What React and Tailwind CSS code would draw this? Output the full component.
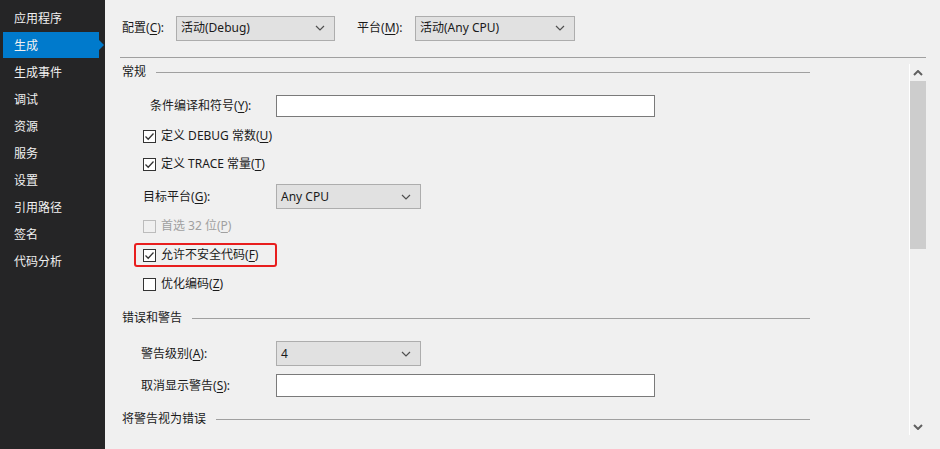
import React from 'react';

const NAV = ['应用程序', '生成', '生成事件', '调试', '资源', '服务', '设置', '引用路径', '签名', '代码分析'];

// 下拉箭头
function Chevron({ up, down }) {
  const d = up ? 'M1 5 L5 1 L9 5' : 'M1 1 L5 5 L9 1';
  return (
    <svg width="10" height="6" viewBox="0 0 10 6" className="shrink-0">
      <path d={d} fill="none" stroke={up || down ? '#606060' : '#505050'} strokeWidth={up || down ? 2 : 1.2} />
    </svg>
  );
}

// 助记符标签，例如 配置(C):
function Mn({ text, k, colon }) {
  return (
    <span>
      {text}(<span className="underline underline-offset-2">{k}</span>){colon ? ':' : ''}
    </span>
  );
}

function Select({ value, w }) {
  return (
    <div className={`${w} h-[25px] flex items-center justify-between bg-[#e1e1e1] border border-[#adadad] pl-[4px] pr-[9px]`}>
      <span>{value}</span>
      <Chevron />
    </div>
  );
}

function Check({ checked, disabled }) {
  return (
    <div className={`w-[13px] h-[13px] border flex items-center justify-center ${disabled ? 'border-[#bcbcbc] bg-[#f0f0f0]' : 'border-[#333] bg-white'}`}>
      {checked && (
        <svg width="11" height="11" viewBox="0 0 11 11">
          <path d="M1.5 5.5 L4.2 8.2 L9.5 2.5" fill="none" stroke="#333" strokeWidth="1.3" />
        </svg>
      )}
    </div>
  );
}

function CheckRow({ checked, disabled, label, k, cls }) {
  return (
    <div className={`flex items-center gap-[5px] h-[20px] ${cls}`}>
      <Check checked={checked} disabled={disabled} />
      <span className={disabled ? 'text-[#a0a0a0]' : ''}>
        <Mn text={label} k={k} />
      </span>
    </div>
  );
}

function Section({ title, cls }) {
  return (
    <div className={`flex items-center h-[20px] gap-[10px] pr-[99px] ${cls}`}>
      <span>{title}</span>
      <div className="flex-1 h-px bg-[#a0a0a0]" />
    </div>
  );
}

export default function App() {
  return (
    <div
      className="w-[940px] h-[449px] flex overflow-hidden text-[12px] text-[#1a1a1a]"
      style={{ fontFamily: '"Noto Sans", "Noto Sans CJK SC", sans-serif' }}
    >
      {/* 左侧导航 */}
      <div className="w-[105px] bg-[#252526] pt-[5px] flex flex-col">
        {NAV.map((n) => (
          <div key={n} className="relative h-[27px] flex items-center">
            {n === '生成' && (
              <>
                <div className="absolute left-[3px] top-0 w-[96px] h-[26px] bg-[#007acc]" />
                <div className="absolute left-[99px] top-[8px] w-0 h-0 border-y-[5px] border-y-transparent border-l-[5px] border-l-[#007acc]" />
              </>
            )}
            <span className="relative pl-[14px] text-[#f1f1f1]">{n}</span>
          </div>
        ))}
      </div>

      {/* 主区域 */}
      <div className="flex-1 bg-[#f0f0f0] pl-[15px] pr-[14px] flex flex-col">
        <div className="h-[58px] border-b border-[#a0a0a0] flex items-center pl-[2px] pb-[1px]">
          <span className="w-[54px]"><Mn text="配置" k="C" colon /></span>
          <Select value="活动(Debug)" w="w-[159px]" />
          <span className="ml-[22px] w-[58px]"><Mn text="平台" k="M" colon /></span>
          <Select value="活动(Any CPU)" w="w-[160px]" />
        </div>

        <div className="flex-1 flex">
          <div className="flex-1 flex flex-col pl-[2px]">
            <Section title="常规" cls="mt-[4px]" />

            <div className="mt-[13px] h-[22px] flex items-center">
              <span className="w-[154px] pl-[28px]"><Mn text="条件编译和符号" k="Y" colon /></span>
              <div className="w-[379px] h-[22px] bg-white border border-[#7a7a7a]" />
            </div>

            <CheckRow checked label="定义 DEBUG 常数" k="U" cls="mt-[9px] pl-[21px]" />
            <CheckRow checked label="定义 TRACE 常量" k="T" cls="mt-[8px] pl-[21px]" />

            <div className="mt-[10px] h-[25px] flex items-center">
              <span className="w-[154px] pl-[21px]"><Mn text="目标平台" k="G" colon /></span>
              <Select value="Any CPU" w="w-[145px]" />
            </div>

            <CheckRow disabled label="首选 32 位" k="P" cls="mt-[7px] pl-[21px]" />

            <div className="mt-[7px] ml-[12px] w-[143px] h-[24px] border-2 border-[#e81e1e] rounded-[3px] flex items-center pl-[7px] gap-[5px]">
              <Check checked />
              <span><Mn text="允许不安全代码" k="F" /></span>
            </div>

            <CheckRow label="优化编码" k="Z" cls="mt-[7px] pl-[21px]" />

            <Section title="错误和警告" cls="mt-[14px]" />

            <div className="mt-[13px] h-[25px] flex items-center">
              <span className="w-[154px] pl-[19px]"><Mn text="警告级别" k="A" colon /></span>
              <Select value="4" w="w-[145px]" />
            </div>

            <div className="mt-[8px] h-[23px] flex items-center">
              <span className="w-[154px] pl-[19px]"><Mn text="取消显示警告" k="S" colon /></span>
              <div className="w-[379px] h-[23px] bg-white border border-[#7a7a7a]" />
            </div>

            <Section title="将警告视为错误" cls="mt-[12px]" />
          </div>

          {/* 滚动条 */}
          <div className="w-[17px] mt-[6px] mb-[14px] border-l border-white flex flex-col items-center">
            <div className="h-[17px] flex items-center justify-center pt-[1px]">
              <Chevron up />
            </div>
            <div className="w-full h-[168px] bg-[#cdcdcd]" />
            <div className="flex-1" />
            <div className="h-[17px] flex items-center justify-center">
              <Chevron down />
            </div>
          </div>
        </div>
      </div>
    </div>
  );
}
